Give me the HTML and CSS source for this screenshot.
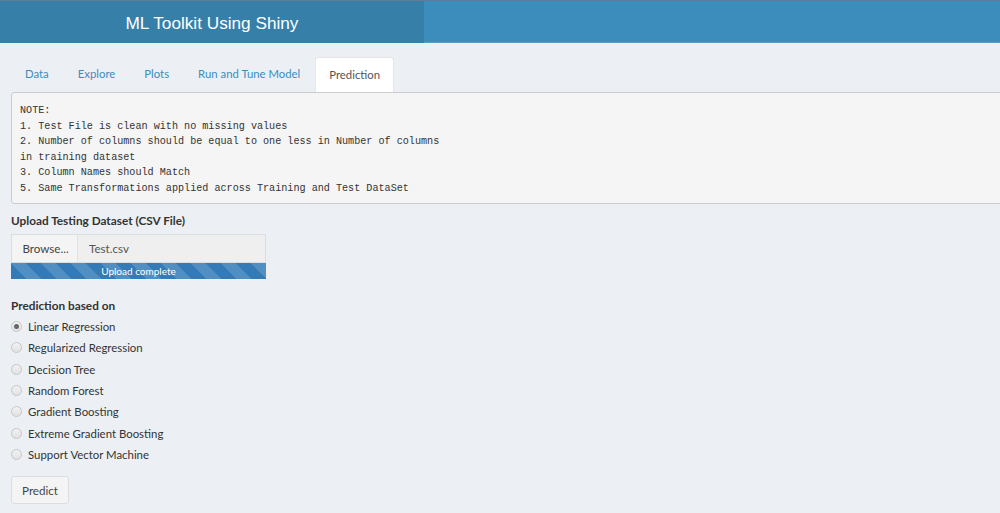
FILE: index.html
```html
<!DOCTYPE html>
<html>
<head>
<meta charset="utf-8">
<link rel="stylesheet" href="styles.css">
</head>
<body>
<header class="main-header">
  <div class="logo">ML Toolkit Using Shiny</div>
  <div class="navbar"></div>
</header>
<main class="content">
  <ul class="nav-tabs">
    <li><a>Data</a></li>
    <li><a>Explore</a></li>
    <li><a>Plots</a></li>
    <li><a>Run and Tune Model</a></li>
    <li class="active"><a>Prediction</a></li>
  </ul>
  <pre class="note">NOTE:
1. Test File is clean with no missing values
2. Number of columns should be equal to one less in Number of columns
in training dataset
3. Column Names should Match
5. Same Transformations applied across Training and Test DataSet</pre>

  <div class="form-group">
    <label class="control-label">Upload Testing Dataset (CSV File)</label>
    <div class="input-group">
      <span class="btn-browse">Browse...</span>
      <span class="file-name">Test.csv</span>
    </div>
    <div class="progress"><span>Upload complete</span></div>
  </div>

  <div class="form-group radios">
    <label class="control-label">Prediction based on</label>
    <div class="radio checked"><span class="dot"></span>Linear Regression</div>
    <div class="radio"><span class="dot"></span>Regularized Regression</div>
    <div class="radio"><span class="dot"></span>Decision Tree</div>
    <div class="radio"><span class="dot"></span>Random Forest</div>
    <div class="radio"><span class="dot"></span>Gradient Boosting</div>
    <div class="radio"><span class="dot"></span>Extreme Gradient Boosting</div>
    <div class="radio"><span class="dot"></span>Support Vector Machine</div>
  </div>

  <button class="btn-predict">Predict</button>
</main>
</body>
</html>
```

FILE: styles.css
```css
html, body {
  margin: 0;
  padding: 0;
  overflow: hidden;
  background: #ecf0f5;
  font-family: Lato, "Open Sans", sans-serif;
  color: #333;
}

.main-header {
  display: flex;
  height: 43px;
  border-top: 1px solid #5d7f96;
  box-sizing: border-box;
}
.logo {
  width: 424px;
  background: #367fa9;
  color: #fff;
  font-family: "Liberation Sans", Arial, sans-serif;
  font-size: 17.2px;
  display: flex;
  align-items: center;
  justify-content: center;
  padding-top: 2px;
}
.navbar {
  flex: 1;
  background: #3c8dbc;
  border-bottom: 1px solid #5a9fca;
}

.content {
  padding: 14px 0 0 11px;
}

.nav-tabs {
  list-style: none;
  margin: 0;
  padding: 0;
  display: flex;
  height: 35px;
}
.nav-tabs li {
  margin-right: 1px;
}
.nav-tabs a {
  display: block;
  height: 35px;
  box-sizing: border-box;
  padding: 0 14px;
  line-height: 33px;
  font-size: 11.35px;
  color: #3c8dbc;
  border-radius: 3px 3px 0 0;
}
.nav-tabs .active a {
  background: #fff;
  color: #555;
  border: 1px solid #e6e6e6;
  border-bottom: none;
  padding: 0 13px;
}

.note {
  margin: 0 -20px 0 0;
  padding: 10px 8px 6px;
  background: #f5f5f5;
  border: 1px solid #ccc;
  border-radius: 3px;
  font-family: "Liberation Mono", "DejaVu Sans Mono", monospace;
  font-size: 10.15px;
  line-height: 15.6px;
  color: #333;
}

.form-group {
  display: flex;
  flex-direction: column;
  width: 255px;
}
.control-label {
  font-weight: bold;
  font-size: 11.8px;
  line-height: 16px;
  margin-top: 9px;
  margin-bottom: 5px;
}
.input-group {
  display: flex;
  height: 29px;
  font-size: 11.6px;
  color: #444;
}
.btn-browse {
  width: 67px;
  background: #f4f4f4;
  border: 1px solid #ddd;
  border-right: 1px solid #e2e2e2;
  display: flex;
  align-items: center;
  justify-content: center;
  box-sizing: border-box;
  padding-left: 2px;
}
.file-name {
  flex: 1;
  background: #efefef;
  border: 1px solid #ddd;
  border-left: none;
  display: flex;
  align-items: center;
  padding-left: 11px;
  color: #555;
}
.progress {
  height: 16px;
  background-color: #337ab7;
  background-image: linear-gradient(45deg, rgba(255,255,255,.15) 25%, transparent 25%, transparent 50%, rgba(255,255,255,.15) 50%, rgba(255,255,255,.15) 75%, transparent 75%, transparent);
  background-size: 30px 30px;
  color: #fff;
  font-size: 10px;
  text-align: center;
  line-height: 17px;
}

.radios .control-label {
  margin-top: 19px;
  margin-bottom: 2px;
}
.radio {
  display: flex;
  align-items: center;
  height: 21.4px;
  font-size: 11.4px;
}
.dot {
  width: 9px;
  height: 9px;
  border-radius: 50%;
  border: 1px solid #c6c6c6;
  background: linear-gradient(#f2f2f2, #e2e2e2);
  margin-right: 6px;
  display: inline-flex;
  align-items: center;
  justify-content: center;
}
.checked .dot::after {
  content: "";
  width: 5px;
  height: 5px;
  border-radius: 50%;
  background: #666;
}

.btn-predict {
  margin-top: 11px;
  width: 58px;
  height: 28px;
  background: #f4f4f4;
  border: 1px solid #ddd;
  border-radius: 3px;
  font-family: Lato, "Open Sans", sans-serif;
  font-size: 11.6px;
  color: #444;
  padding: 0;
}
```
